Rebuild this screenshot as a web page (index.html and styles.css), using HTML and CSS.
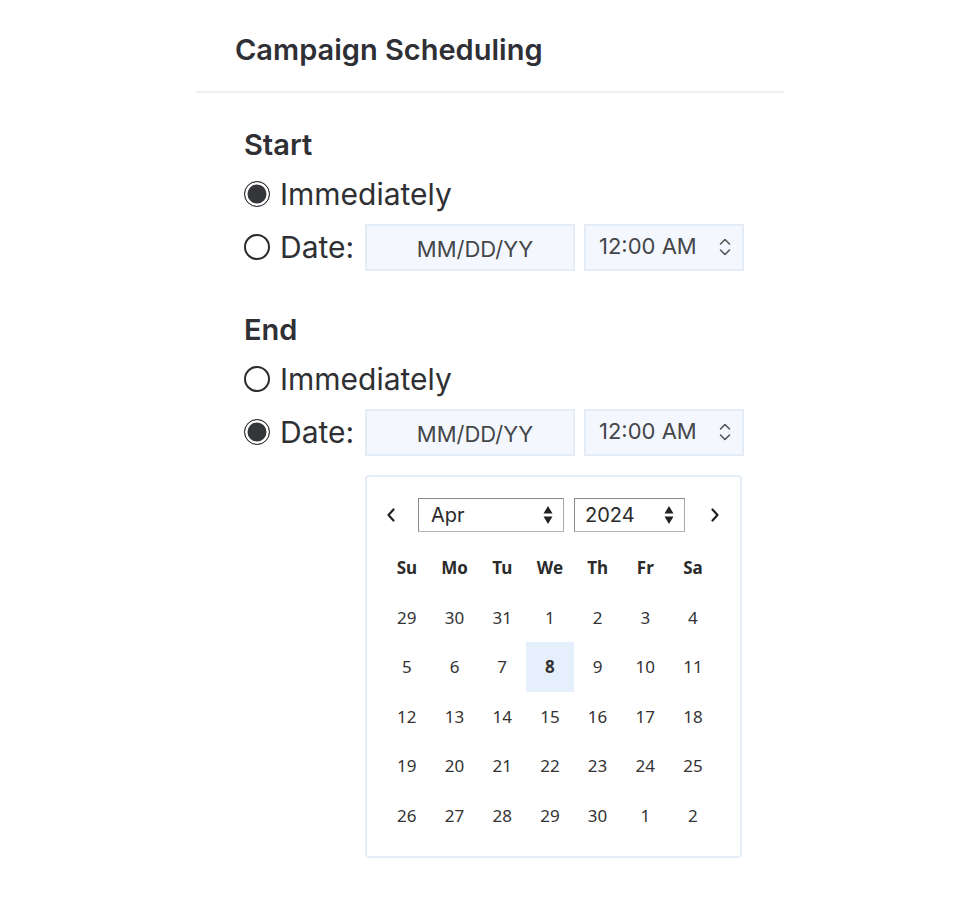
FILE: index.html
```html
<!DOCTYPE html>
<html lang="en">
<head>
    <meta charset="UTF-8">
    <meta name="viewport" content="width=device-width, initial-scale=1.0">
    <title>Campaign Scheduling</title>
    <link rel="stylesheet" href="styles.css">
</head>
<body>
    <div class="panel">
        <div class="panel-header">
            <h1>Campaign Scheduling</h1>
        </div>

        <div class="panel-body">
            <div class="group">
                <h2>Start</h2>
                <label class="option">
                    <input type="radio" name="start" checked>
                    <span>Immediately</span>
                </label>
                <div class="option date-row">
                    <label class="date-label">
                        <input type="radio" name="start">
                        <span>Date:</span>
                    </label>
                    <div class="date-input">MM/DD/YY</div>
                    <div class="time-input">
                        <span>12:00 AM</span>
                        <svg class="spinner" width="14" height="24" viewBox="0 0 14 24">
                            <path d="M2.5 9 L7 4.5 L11.5 9" fill="none" stroke="#555" stroke-width="1.6" stroke-linecap="round" stroke-linejoin="round"/>
                            <path d="M2.5 15 L7 19.5 L11.5 15" fill="none" stroke="#555" stroke-width="1.6" stroke-linecap="round" stroke-linejoin="round"/>
                        </svg>
                    </div>
                </div>
            </div>

            <div class="group end">
                <h2>End</h2>
                <label class="option">
                    <input type="radio" name="end">
                    <span>Immediately</span>
                </label>
                <div class="option date-row">
                    <label class="date-label">
                        <input type="radio" name="end" checked>
                        <span>Date:</span>
                    </label>
                    <div class="date-input">MM/DD/YY</div>
                    <div class="time-input">
                        <span>12:00 AM</span>
                        <svg class="spinner" width="14" height="24" viewBox="0 0 14 24">
                            <path d="M2.5 9 L7 4.5 L11.5 9" fill="none" stroke="#555" stroke-width="1.6" stroke-linecap="round" stroke-linejoin="round"/>
                            <path d="M2.5 15 L7 19.5 L11.5 15" fill="none" stroke="#555" stroke-width="1.6" stroke-linecap="round" stroke-linejoin="round"/>
                        </svg>
                    </div>
                </div>

                <div class="calendar">
                    <div class="cal-nav">
                        <button class="nav-btn">
                            <svg width="12" height="16" viewBox="0 0 12 16"><path d="M8.5 2.5 L3.5 8 L8.5 13.5" fill="none" stroke="#222" stroke-width="2.2" stroke-linecap="round" stroke-linejoin="round"/></svg>
                        </button>
                        <div class="select month">
                            <span>Apr</span>
                            <svg width="10" height="20" viewBox="0 0 10 20"><path d="M5 1 L9.5 8.5 H0.5 Z M5 19 L9.5 11.5 H0.5 Z" fill="#222"/></svg>
                        </div>
                        <div class="select year">
                            <span>2024</span>
                            <svg width="10" height="20" viewBox="0 0 10 20"><path d="M5 1 L9.5 8.5 H0.5 Z M5 19 L9.5 11.5 H0.5 Z" fill="#222"/></svg>
                        </div>
                        <button class="nav-btn next">
                            <svg width="12" height="16" viewBox="0 0 12 16"><path d="M3.5 2.5 L8.5 8 L3.5 13.5" fill="none" stroke="#222" stroke-width="2.2" stroke-linecap="round" stroke-linejoin="round"/></svg>
                        </button>
                    </div>

                    <div class="cal-grid">
                        <div class="wd">Su</div><div class="wd">Mo</div><div class="wd">Tu</div><div class="wd">We</div><div class="wd">Th</div><div class="wd">Fr</div><div class="wd">Sa</div>
                        <div>29</div><div>30</div><div>31</div><div>1</div><div>2</div><div>3</div><div>4</div>
                        <div>5</div><div>6</div><div>7</div><div class="today">8</div><div>9</div><div>10</div><div>11</div>
                        <div>12</div><div>13</div><div>14</div><div>15</div><div>16</div><div>17</div><div>18</div>
                        <div>19</div><div>20</div><div>21</div><div>22</div><div>23</div><div>24</div><div>25</div>
                        <div>26</div><div>27</div><div>28</div><div>29</div><div>30</div><div>1</div><div>2</div>
                    </div>
                </div>
            </div>
        </div>
    </div>
</body>
</html>
```

FILE: styles.css
```css
body {
    margin: 0;
    font-family: Inter, "Noto Sans", sans-serif;
    color: #2f3034;
    background: #fff;
}
.panel {
    width: 588px;
    margin: 0 auto;
}
.panel-header {
    padding: 33px 37px 24px 39px;
    border-bottom: 2px solid #f0f0f0;
}
h1 {
    margin: 0;
    font-size: 29px;
    line-height: 34px;
    font-weight: 600;
    color: #2e3035;
}
.panel-body {
    padding-left: 48px;
}
.group {
    display: flex;
    flex-direction: column;
    align-items: flex-start;
    gap: 10px;
    padding-top: 35px;
}
.group.end {
    padding-top: 43px;
}
h2 {
    margin: 0 0 2px;
    font-size: 29px;
    line-height: 34px;
    font-weight: 600;
}
.option {
    display: flex;
    align-items: center;
    gap: 10px;
    height: 40px;
    font-size: 30px;
    cursor: pointer;
}
.date-row {
    height: 46px;
    gap: 0;
}
.date-label {
    display: flex;
    align-items: center;
    gap: 10px;
    width: 121px;
}
input[type="radio"] {
    appearance: none;
    margin: 0;
    width: 26px;
    height: 26px;
    border: 2px solid #2b2c30;
    border-radius: 50%;
    box-sizing: border-box;
    background: #fff;
}
input[type="radio"]:checked {
    border-width: 1.5px;
    background: #35363a;
    box-shadow: inset 0 0 0 2.5px #fff;
}
.date-input, .time-input {
    box-sizing: border-box;
    height: 47px;
    background: #f4f8fe;
    border: 2px solid #e4ecf8;
    font-size: 22px;
    color: #45464a;
    display: flex;
    align-items: center;
}
.date-input {
    width: 210px;
    justify-content: center;
    padding: 4px 0 0 10px;
}
.time-input {
    width: 160px;
    margin-left: 9px;
    padding: 0 10px 0 13px;
    justify-content: space-between;
}
.time-input span {
    margin-top: -2px;
}
.calendar {
    box-sizing: border-box;
    width: 377px;
    margin: 10px 0 0 121px;
    padding: 21px 17px 16px 16px;
    border: 2px solid #e6eefa;
    border-radius: 4px;
}
.cal-nav {
    display: flex;
    align-items: center;
}
.nav-btn {
    border: none;
    background: none;
    padding: 0;
    width: 16px;
    height: 20px;
    display: flex;
    align-items: center;
    justify-content: center;
    cursor: pointer;
}
.nav-btn.next {
    margin-left: auto;
}
.select {
    box-sizing: border-box;
    height: 34px;
    border: 1px solid #8a8a8a;
    border-right-color: #a8a8a8;
    border-bottom-color: #b5b5b5;
    display: flex;
    align-items: center;
    justify-content: space-between;
    padding: 0 10px 0 12px;
    font-size: 20px;
    color: #2a2a2a;
}
.select.month {
    width: 146px;
    margin-left: 19px;
}
.select.year {
    width: 111px;
    margin-left: 10px;
    padding-left: 10px;
}
.cal-grid {
    display: grid;
    grid-template-columns: repeat(7, 47.7px);
    grid-auto-rows: 49.5px;
    margin: 11px 0 0 0;
    font-family: "Noto Sans", sans-serif;
    font-size: 17px;
    color: #333;
}
.cal-grid div {
    display: flex;
    align-items: center;
    justify-content: center;
}
.cal-grid .wd {
    font-weight: 700;
    color: #2b2b2b;
}
.cal-grid .today {
    background: #e6f0fc;
    font-weight: 700;
}
```
